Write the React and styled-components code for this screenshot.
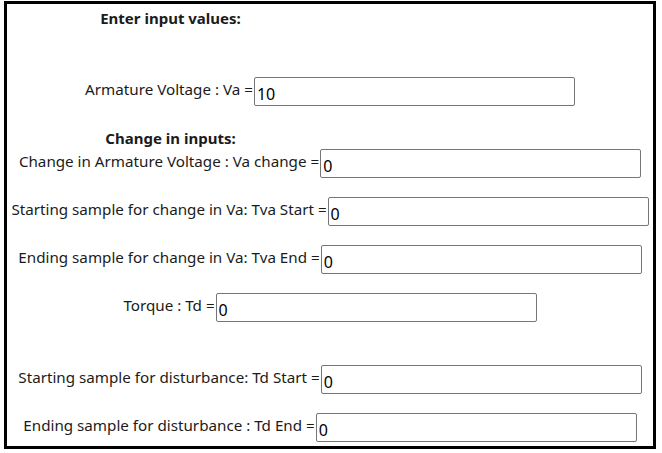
import React from 'react';
import styled, { createGlobalStyle } from 'styled-components';

const GlobalStyle = createGlobalStyle`
  body {
    margin: 0;
    background: #fff;
    font-family: "Noto Sans", "Open Sans", sans-serif;
    color: #1b1b1b;
  }
`;

const Frame = styled.form`
  width: 652px;
  height: 448px;
  margin: 1px 0 0 4px;
  box-sizing: border-box;
  border: 3px solid #000;
  padding-top: 3px;
  display: flex;
  flex-direction: column;
`;

const Heading = styled.div`
  width: 50%;
  padding-left: 2px;
  text-align: center;
  font-weight: bold;
  font-size: 15px;
  line-height: 22px;
  margin-top: ${p => p.top || 0}px;
`;

const Row = styled.div`
  display: flex;
  justify-content: center;
  align-items: center;
  height: 29px;
  margin-top: ${p => p.top || 0}px;
`;

const Label = styled.label`
  font-size: 15.2px;
  line-height: 22px;
  margin-right: 1px;
  position: relative;
  top: -3px;
  white-space: pre;
`;

const Field = styled.input`
  width: 321px;
  height: 29px;
  box-sizing: border-box;
  border: 1px solid #767676;
  border-radius: 2px;
  padding: 4px 2px 0;
  font-family: inherit;
  font-size: 16px;
  color: #000;
  background: #fff;
  outline: none;
`;

function InputRow({ label, value, top }) {
  return (
    <Row top={top}>
      <Label>{label} =</Label>
      <Field type="text" defaultValue={value} />
    </Row>
  );
}

export default function App() {
  return (
    <>
      <GlobalStyle />
      <Frame>
        <Heading>Enter input values:</Heading>
        <InputRow top={48} label="Armature Voltage : Va" value="10" />
        <Heading top={21}>Change in inputs:</Heading>
        <InputRow label="Change in Armature Voltage : Va change" value="0" />
        <InputRow top={19} label="Starting sample for change in Va: Tva Start" value="0" />
        <InputRow top={19} label="Ending sample for change in Va: Tva End" value="0" />
        <InputRow top={19} label="Torque : Td" value="0" />
        <InputRow top={43} label="Starting sample for disturbance: Td Start" value="0" />
        <InputRow top={19} label="Ending sample for disturbance : Td End" value="0" />
      </Frame>
    </>
  );
}
